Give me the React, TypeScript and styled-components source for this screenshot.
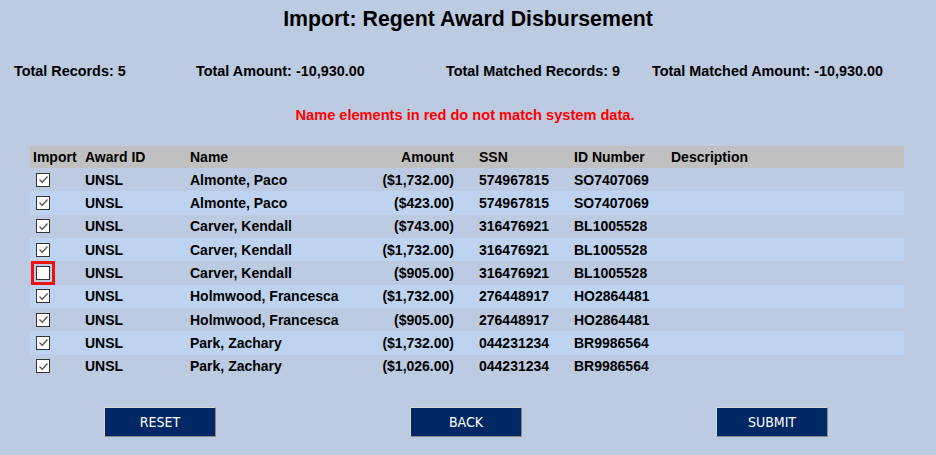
import styled, { createGlobalStyle } from 'styled-components';

const GlobalStyle = createGlobalStyle`
  body {
    margin: 0;
    background: #bccae2;
    font-family: "Liberation Sans", Arial, sans-serif;
    color: #000;
  }
`;

type Row = {
  checked: boolean;
  awardId: string;
  name: string;
  amount: string;
  ssn: string;
  idNumber: string;
  description: string;
};

const rows: Row[] = [
  { checked: true, awardId: 'UNSL', name: 'Almonte, Paco', amount: '($1,732.00)', ssn: '574967815', idNumber: 'SO7407069', description: '' },
  { checked: true, awardId: 'UNSL', name: 'Almonte, Paco', amount: '($423.00)', ssn: '574967815', idNumber: 'SO7407069', description: '' },
  { checked: true, awardId: 'UNSL', name: 'Carver, Kendall', amount: '($743.00)', ssn: '316476921', idNumber: 'BL1005528', description: '' },
  { checked: true, awardId: 'UNSL', name: 'Carver, Kendall', amount: '($1,732.00)', ssn: '316476921', idNumber: 'BL1005528', description: '' },
  { checked: false, awardId: 'UNSL', name: 'Carver, Kendall', amount: '($905.00)', ssn: '316476921', idNumber: 'BL1005528', description: '' },
  { checked: true, awardId: 'UNSL', name: 'Holmwood, Francesca', amount: '($1,732.00)', ssn: '276448917', idNumber: 'HO2864481', description: '' },
  { checked: true, awardId: 'UNSL', name: 'Holmwood, Francesca', amount: '($905.00)', ssn: '276448917', idNumber: 'HO2864481', description: '' },
  { checked: true, awardId: 'UNSL', name: 'Park, Zachary', amount: '($1,732.00)', ssn: '044231234', idNumber: 'BR9986564', description: '' },
  { checked: true, awardId: 'UNSL', name: 'Park, Zachary', amount: '($1,026.00)', ssn: '044231234', idNumber: 'BR9986564', description: '' },
];

export default function App() {
  return (
    <>
      <GlobalStyle />
      <Page>
        <Title>Import: Regent Award Disbursement</Title>

        <Stats>
          <Stat>Total Records: 5</Stat>
          <Stat>Total Amount: -10,930.00</Stat>
          <Stat>Total Matched Records: 9</Stat>
          <Stat>Total Matched Amount: -10,930.00</Stat>
        </Stats>

        <Notice>Name elements in red do not match system data.</Notice>

        <Table>
          <HeaderRow>
            <Cell>Import</Cell>
            <Cell>Award ID</Cell>
            <Cell>Name</Cell>
            <AmountCell>Amount</AmountCell>
            <Cell>SSN</Cell>
            <Cell>ID Number</Cell>
            <Cell>Description</Cell>
          </HeaderRow>
          {rows.map((r, i) => (
            <DataRow key={i} $alt={i % 2 === 1}>
              <CheckCell>
                <CheckBox $flagged={!r.checked}>
                  {r.checked && (
                    <svg width="11" height="11" viewBox="0 0 11 11">
                      <polyline points="1.5,5.5 4.2,8.2 9.5,2.5" fill="none" stroke="#555" strokeWidth="1.3" />
                    </svg>
                  )}
                </CheckBox>
              </CheckCell>
              <Cell>{r.awardId}</Cell>
              <Cell>{r.name}</Cell>
              <AmountCell>{r.amount}</AmountCell>
              <Cell>{r.ssn}</Cell>
              <Cell>{r.idNumber}</Cell>
              <Cell>{r.description}</Cell>
            </DataRow>
          ))}
        </Table>

        <Actions>
          <ActionButton>RESET</ActionButton>
          <ActionButton>BACK</ActionButton>
          <ActionButton>SUBMIT</ActionButton>
        </Actions>
      </Page>
    </>
  );
}

const Page = styled.div`
  padding-top: 7px;
`;

const Title = styled.h1`
  margin: 0;
  font-size: 16pt;
  font-weight: bold;
  text-align: center;
  line-height: 24px;
`;

const Stats = styled.div`
  display: grid;
  grid-template-columns: 182px 250px 206px auto;
  margin-top: 32px;
  padding-left: 14px;
`;

const Stat = styled.div`
  font-size: 14.4px;
  font-weight: bold;
  line-height: 16px;
  white-space: nowrap;
`;

const Notice = styled.div`
  margin-top: 28px;
  padding-right: 6px;
  text-align: center;
  color: #ff0000;
  font-size: 14.6px;
  font-weight: bold;
  line-height: 16px;
`;

const Table = styled.div`
  margin: 23px 32px 0 30px;
  font-size: 14px;
  font-weight: bold;
`;

const RowBase = styled.div`
  display: grid;
  grid-template-columns: 52px 105px 183px 106px 95px 97px 1fr;
  align-items: center;
`;

const HeaderRow = styled(RowBase)`
  height: 22px;
  background: #c0c0c0;
`;

const DataRow = styled(RowBase)<{ $alt: boolean }>`
  height: 23.33px;
  background: ${(p) => (p.$alt ? '#bed3f0' : '#bccae2')};
`;

const Cell = styled.div`
  padding: 0 3px;
  white-space: nowrap;
`;

const AmountCell = styled(Cell)`
  text-align: right;
  padding-right: 22px;
`;

const CheckCell = styled.div`
  display: flex;
  align-items: center;
  padding-left: 6px;
`;

const CheckBox = styled.span<{ $flagged: boolean }>`
  display: flex;
  align-items: center;
  justify-content: center;
  box-sizing: border-box;
  width: 14px;
  height: 14px;
  border: 1px solid #333;
  background: #fff;
  outline: ${(p) => (p.$flagged ? '3px solid #ee1111' : 'none')};
  outline-offset: 2px;
`;

const Actions = styled.div`
  display: flex;
  justify-content: space-between;
  margin-top: 29px;
  padding: 0 108px 0 104px;
`;

const ActionButton = styled.button`
  width: 112px;
  height: 30px;
  background: #002864;
  color: #fff;
  border: 1px solid;
  border-color: #d8d8d8 #8a8a8a #8a8a8a #d8d8d8;
  font-family: "Liberation Sans Narrow", "DejaVu Sans Condensed", sans-serif;
  font-size: 14px;
  cursor: pointer;
`;
